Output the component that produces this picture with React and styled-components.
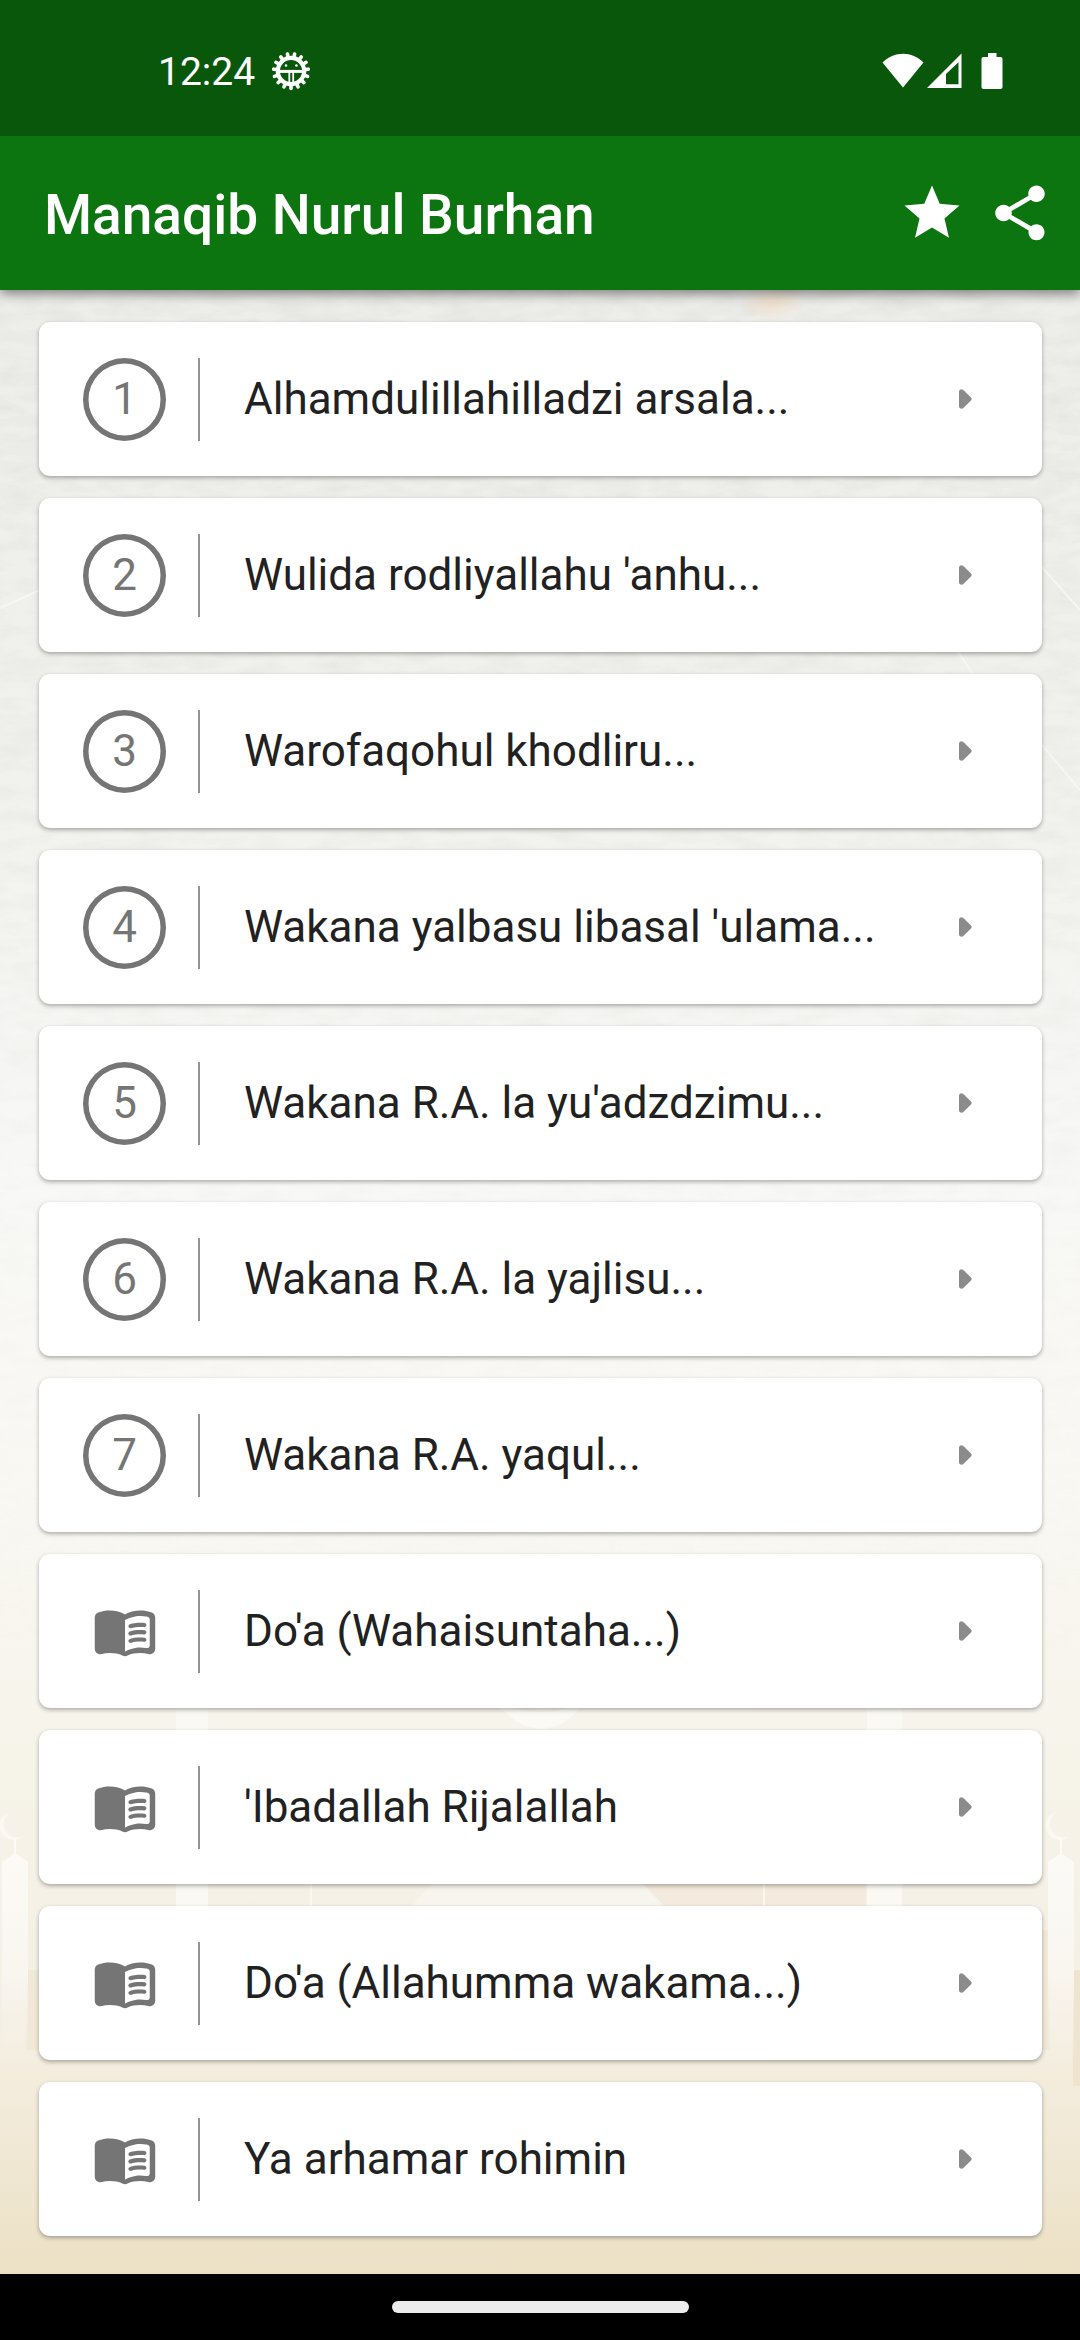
import React from 'react';
import styled, { createGlobalStyle } from 'styled-components';

const GlobalStyle = createGlobalStyle`
    * {
        box-sizing: border-box;
    }
    body {
        margin: 0;
        font-family: Roboto, "Noto Sans", sans-serif;
    }
`;

const Screen = styled.div`
    width: 1080px;
    height: 2340px;
    display: flex;
    flex-direction: column;
    overflow: hidden;
`;

const StatusBar = styled.div`
    height: 136px;
    flex: none;
    display: flex;
    align-items: center;
    justify-content: space-between;
    padding: 6px 76px 0 158px;
    background-color: #09570a;
    color: #fff;
    z-index: 3;
`;

const StatusGroup = styled.div`
    display: flex;
    align-items: center;
`;

const Clock = styled.span`
    padding-top: 2px;
    font-size: 39px;
    line-height: 44px;
    margin-right: 16px;
`;

const AppBar = styled.header`
    height: 154px;
    flex: none;
    display: flex;
    align-items: center;
    gap: 22px;
    padding: 0 27px 0 44px;
    background-color: #0c750f;
    color: #fff;
    box-shadow: 0 4px 11px rgba(0, 0, 0, 0.45);
    z-index: 2;
`;

const Title = styled.h1`
    flex: 1;
    margin: 0;
    padding-top: 4px;
    font-size: 55px;
    font-weight: 500;
    line-height: 64px;
`;

const Content = styled.main`
    flex: 1;
    position: relative;
    z-index: 0;
    padding: 32px 38px 0 39px;
`;

const Backdrop = styled.svg`
    position: absolute;
    top: 0;
    left: 0;
    z-index: -1;
`;

const List = styled.div`
    display: flex;
    flex-direction: column;
    gap: 22px;
`;

const Card = styled.div`
    height: 154px;
    display: flex;
    align-items: center;
    padding: 0 44px;
    border-radius: 11px;
    background-color: #fff;
    box-shadow: 0 2px 4px rgba(0, 0, 0, 0.3), 0 0 1px rgba(0, 0, 0, 0.08);
`;

const Leading = styled.div`
    width: 83px;
    height: 83px;
    display: flex;
    align-items: center;
    justify-content: center;
    color: #757575;
`;

const NumberRing = styled(Leading)`
    border-radius: 50%;
    box-shadow: inset 0 0 0 5.5px #757575;
    font-size: 44px;
    line-height: 52px;
`;

const Divider = styled.div`
    width: 2px;
    height: 83px;
    margin: 0 44px 0 32px;
    background-color: #939393;
`;

const Label = styled.div`
    flex: 1;
    font-size: 44px;
    line-height: 52px;
    color: #212121;
    white-space: nowrap;
`;

const Arrow = styled.svg`
    margin-right: 26px;
`;

const NavBar = styled.div`
    height: 66px;
    flex: none;
    display: flex;
    align-items: center;
    justify-content: center;
    background-color: #000;
    z-index: 1;
`;

const NavPill = styled.div`
    width: 297px;
    height: 12px;
    border-radius: 6px;
    background-color: #ececec;
`;

const chapters = [
    { number: 1, title: 'Alhamdulillahilladzi arsala...' },
    { number: 2, title: "Wulida rodliyallahu 'anhu..." },
    { number: 3, title: 'Warofaqohul khodliru...' },
    { number: 4, title: "Wakana yalbasu libasal 'ulama..." },
    { number: 5, title: "Wakana R.A. la yu'adzdzimu..." },
    { number: 6, title: 'Wakana R.A. la yajlisu...' },
    { number: 7, title: 'Wakana R.A. yaqul...' },
    { title: "Do'a (Wahaisuntaha...)" },
    { title: "'Ibadallah Rijalallah" },
    { title: "Do'a (Allahumma wakama...)" },
    { title: 'Ya arhamar rohimin' },
];

const teeth = Array.from({ length: 15 }, (_, i) => i * 24 + 12);

const GearIcon = () => (
    <svg width="40" height="40" viewBox="-20 -20 40 40" fill="none" stroke="#fff">
        {teeth.map(angle => (
            <line
                key={angle}
                y1="-14"
                y2="-17.4"
                strokeWidth="3.6"
                strokeLinecap="round"
                transform={`rotate(${angle})`}
            />
        ))}
        <circle r="13.2" strokeWidth="4.2" />
        <path d="M-13 .4H13" strokeWidth="3" />
        <path d="M-1.700 .4V13M2.200 .4V13" strokeWidth="1.8" />
        <circle cx="-5" cy="-5.5" r="1.3" fill="#fff" stroke="none" />
        <circle cx="5.4" cy="-5.5" r="1.3" fill="#fff" stroke="none" />
    </svg>
);

const StatusIcons = () => (
    <svg width="122" height="38" viewBox="0 0 122 38" fill="#fff">
        <path d="M.5 10.5C12-1.2 30-1.2 41.500 10.500L21 35.500z" />
        <path fillRule="evenodd" d="M45 36L79.500 1.500V36zM64 22V32.300H76.500V10.300z" />
        <path d="M106 1h8.500v4h4a2 2 0 0 1 2 2v28a2 2 0 0 1-2 2h-17a2 2 0 0 1-2-2v-28a2 2 0 0 1 2-2h4.500z" />
    </svg>
);

const StarIcon = () => (
    <svg width="66" height="66" viewBox="0 0 24 24" fill="#fff">
        <path d="M12 17.27L18.18 21l-1.64-7.03L22 9.24l-7.19-.61L12 2 9.190 8.630 2 9.240l5.460 4.730L5.820 21z" />
    </svg>
);

const ShareIcon = () => (
    <svg width="66" height="66" viewBox="0 0 24 24" fill="#fff">
        <path d="M18 16.080c-.76 0-1.440.3-1.960.77L8.910 12.700c.05-.23.09-.46.09-.7s-.04-.47-.09-.7l7.050-4.110c.54.5 1.250.81 2.040.81 1.660 0 3-1.340 3-3s-1.340-3-3-3-3 1.340-3 3c0 .24.04.47.09.7L8.040 9.810C7.500 9.310 6.790 9 6 9c-1.660 0-3 1.340-3 3s1.340 3 3 3c.79 0 1.500-.31 2.040-.81l7.120 4.160c-.05.21-.08.43-.08.65 0 1.610 1.310 2.920 2.920 2.920s2.920-1.310 2.920-2.920-1.310-2.920-2.920-2.920z" />
    </svg>
);

const bookLine = 'c-.32 0-.61-.2-.71-.52-.13-.39.09-.82.48-.94 1.54-.5 3.53-.66 5.36-.45.41.05.71.42.66.83-.05.41-.42.71-.83.66-1.62-.19-3.39-.04-4.73.39-.08.02-.16.03-.23.03z';

const BookIcon = () => (
    <svg width="66" height="66" viewBox="0 0 24 24" fill="currentColor">
        <path d="M17.5 4.5c-1.95 0-4.05.4-5.5 1.5-1.45-1.1-3.55-1.5-5.5-1.5-1.45 0-2.99.22-4.28.79C1.49 5.62 1 6.33 1 7.14v11.28c0 1.3 1.22 2.26 2.48 1.94.98-.25 2.02-.36 3.02-.36 1.56 0 3.22.26 4.56.92.6.3 1.28.3 1.87 0 1.34-.67 3-.92 4.56-.92 1 0 2.04.11 3.02.36 1.26.33 2.48-.63 2.48-1.94V7.14c0-.81-.49-1.52-1.22-1.85-1.28-.57-2.82-.79-4.27-.79zM21 17.23c0 .63-.58 1.09-1.2.98-.75-.14-1.53-.2-2.3-.2-1.7 0-4.15.65-5.5 1.5V8c1.35-.85 3.8-1.500 5.500-1.500.92 0 1.830.09 2.700.28.46.1.8.51.8.98v9.470z" />
        <path d={`M13.980 11.010${bookLine}M13.980 13.670${bookLine}M13.980 16.330${bookLine}`} />
    </svg>
);

const Minaret = ({ x }) => (
    <g transform={`translate(${x} 1812)`}>
        <path d="M9 0A14 14 0 1 0 21 24A13 13 0 0 1 9 0z" fill="#fdfcf6" opacity="0.7" />
        <path d="M12 26h2v16l12 8v200H0V50l12-8z" fill="url(#tower)" />
    </g>
);

// paper texture on top fading into a pale mosque skyline
const Scenery = () => (
    <Backdrop width="1080" height="1984" viewBox="0 290 1080 1984">
        <defs>
            <linearGradient id="paper" x1="0" y1="0" x2="0" y2="1">
                <stop offset="0" stopColor="#ededea" />
                <stop offset="0.25" stopColor="#f1f1ee" />
                <stop offset="0.45" stopColor="#f8f8f6" />
                <stop offset="0.6" stopColor="#f9f8f3" />
                <stop offset="0.75" stopColor="#f6f3e9" />
                <stop offset="0.88" stopColor="#f5efe3" />
                <stop offset="1" stopColor="#ece1c5" />
            </linearGradient>
            <radialGradient id="glow">
                <stop offset="0" stopColor="#f6cfa6" stopOpacity="0.4" />
                <stop offset="1" stopColor="#f6cfa6" stopOpacity="0" />
            </radialGradient>
            <linearGradient id="tower" x1="0" y1="0" x2="0" y2="1">
                <stop offset="0" stopColor="#fcfbf7" />
                <stop offset="0.6" stopColor="#f9f6f0" />
                <stop offset="1" stopColor="#f6f1e6" stopOpacity="0" />
            </linearGradient>
            <linearGradient id="fade" x1="0" y1="0" x2="0" y2="1">
                <stop offset="0" stopColor="#fff" />
                <stop offset="0.5" stopColor="#fff" stopOpacity="0.3" />
                <stop offset="0.7" stopColor="#fff" stopOpacity="0" />
            </linearGradient>
            <mask id="fadeMask">
                <rect y="290" width="1080" height="1984" fill="url(#fade)" />
            </mask>
            <filter id="grain" x="0" y="0" width="100%" height="100%">
                <feTurbulence type="fractalNoise" baseFrequency="0.025 0.07" numOctaves="3" seed="4" />
                <feColorMatrix values="0 0 0 0 0.45  0 0 0 0 0.45  0 0 0 0 0.4  0.3 0 0 0 -0.11" />
            </filter>
        </defs>
        <rect y="290" width="1080" height="1984" fill="url(#paper)" />
        <g mask="url(#fadeMask)">
            <rect y="290" width="1080" height="1984" filter="url(#grain)" />
            <path d="M0 608L40 590M950 640L984 690M1040 565L1080 610M1042 745L1080 790" stroke="#fff" strokeWidth="2" opacity="0.6" />
        </g>
        <ellipse cx="772" cy="302" rx="34" ry="20" fill="url(#glow)" />
        <rect x="176" y="1700" width="32" height="230" fill="#faf9f3" />
        <rect x="867" y="1700" width="35" height="230" fill="#faf9f3" />
        <path d="M494 1700Q540 1758 588 1700Q540 1724 494 1700z" fill="#fbfaf5" />
        <path d="M640 1880H866V1910H668z" fill="#f4eadd" />
        <path d="M436 1880H638L668 1910H408z" fill="#f8f5ee" />
        <path d="M311 1880V1910M764 1880V1910" stroke="#fbf8f1" strokeWidth="2" />
        <rect x="26" y="1970" width="13" height="80" fill="#eee2cb" opacity="0.5" />
        <rect x="1042" y="1930" width="8" height="120" fill="#eee2cb" opacity="0.5" />
        <rect x="1073" y="1970" width="7" height="116" fill="#eddfc6" opacity="0.7" />
        <Minaret x={2} />
        <Minaret x={1048} />
    </Backdrop>
);

const Chapter = ({ chapter }) => (
    <Card>
        {chapter.number
            ? <NumberRing>{chapter.number}</NumberRing>
            : <Leading><BookIcon /></Leading>}
        <Divider />
        <Label>{chapter.title}</Label>
        <Arrow width="13" height="20" viewBox="0 0 13 20" fill="#8b8b8b">
            <path d="M0 3C0 .4 2.600-.6 4.600 1.200L12 8.600Q13.300 10 12 11.400L4.600 18.800C2.600 20.600 0 19.600 0 17z" />
        </Arrow>
    </Card>
);

const App = () => (
    <Screen>
        <GlobalStyle />
        <StatusBar>
            <StatusGroup>
                <Clock>12:24</Clock>
                <GearIcon />
            </StatusGroup>
            <StatusIcons />
        </StatusBar>
        <AppBar>
            <Title>Manaqib Nurul Burhan</Title>
            <StarIcon />
            <ShareIcon />
        </AppBar>
        <Content>
            <Scenery />
            <List>
                {chapters.map(chapter => (
                    <Chapter key={chapter.title} chapter={chapter} />
                ))}
            </List>
        </Content>
        <NavBar>
            <NavPill />
        </NavBar>
    </Screen>
);

export default App;
